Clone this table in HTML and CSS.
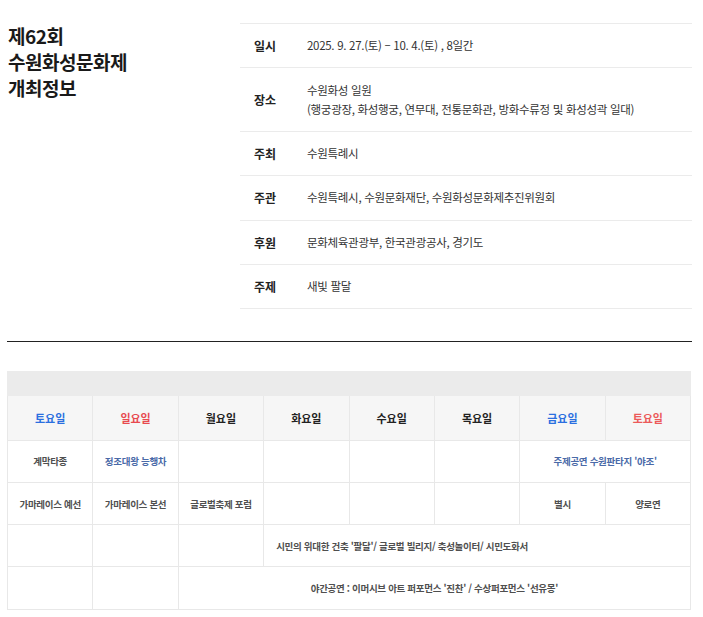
FILE: index.html
```html
<!DOCTYPE html>
<html lang="ko">
<head>
<meta charset="utf-8">
<title>제62회 수원화성문화제 개최정보</title>
<link rel="stylesheet" href="styles.css">
</head>
<body>
<div class="page">
  <section class="info">
    <h1 class="title">제62회<br>수원화성문화제<br>개최정보</h1>
    <dl class="info-list">
      <div class="info-row"><dt>일시</dt><dd>2025. 9. 27.(토) – 10. 4.(토) , 8일간</dd></div>
      <div class="info-row"><dt>장소</dt><dd>수원화성 일원<br>(행궁광장, 화성행궁, 연무대, 전통문화관, 방화수류정 및 화성성곽 일대)</dd></div>
      <div class="info-row"><dt>주최</dt><dd>수원특례시</dd></div>
      <div class="info-row"><dt>주관</dt><dd>수원특례시, 수원문화재단, 수원화성문화제추진위원회</dd></div>
      <div class="info-row"><dt>후원</dt><dd>문화체육관광부, 한국관광공사, 경기도</dd></div>
      <div class="info-row"><dt>주제</dt><dd>새빛 팔달</dd></div>
    </dl>
  </section>
  <hr class="divider">
  <div class="schedule">
    <div class="schedule-bar"></div>
    <table class="sched">
      <thead>
        <tr>
          <th class="sat">토요일</th>
          <th class="sun">일요일</th>
          <th>월요일</th>
          <th>화요일</th>
          <th>수요일</th>
          <th>목요일</th>
          <th class="fri">금요일</th>
          <th class="sat2">토요일</th>
        </tr>
      </thead>
      <tbody>
        <tr>
          <td>계막타종</td>
          <td class="hl">정조대왕 능행차</td>
          <td></td><td></td><td></td><td></td>
          <td colspan="2" class="hl">주제공연 수원판타지 '야조'</td>
        </tr>
        <tr>
          <td>가마레이스 예선</td>
          <td>가마레이스 본선</td>
          <td>글로벌축제 포럼</td>
          <td></td><td></td><td></td>
          <td>별시</td>
          <td>양로연</td>
        </tr>
        <tr>
          <td></td><td></td><td></td>
          <td colspan="5" class="left">시민의 위대한 건축 '팔달'/ 글로벌 빌리지/ 축성놀이터/ 시민도화서</td>
        </tr>
        <tr>
          <td></td><td></td>
          <td colspan="6">야간공연 : 이머시브 아트 퍼포먼스 '진찬' / 수상퍼포먼스 '선유몽'</td>
        </tr>
      </tbody>
    </table>
  </div>
</div>
</body>
</html>
```

FILE: styles.css
```css
* { box-sizing: border-box; }
html, body { margin: 0; padding: 0; background: #fff; }
body {
  font-family: "Noto Sans CJK KR", "Noto Sans", sans-serif;
  color: #222;
}
.page {
  width: 685px;
  margin-left: 7px;
}
.info {
  display: flex;
  padding-top: 23px;
}
.title {
  width: 233px;
  margin: 0;
  padding-left: 1px;
  font-size: 19px;
  line-height: 26px;
  font-weight: 700;
  color: #1a1a1a;
  letter-spacing: -0.5px;
}
.info-list {
  flex: 1;
  margin: 0;
  border-top: 1px solid #ebebeb;
}
.info-row {
  display: flex;
  align-items: center;
  border-bottom: 1px solid #ebebeb;
  padding: 12.2px 0;
}
.info-row dt {
  width: 67px;
  padding-left: 14px;
  font-size: 12px;
  line-height: 19px;
  font-weight: 700;
  color: #222;
}
.info-row dd {
  margin: 0;
  font-size: 11.5px;
  line-height: 19px;
  color: #333;
  letter-spacing: -0.3px;
}
.divider {
  margin: 32px 0 0;
  border: 0;
  border-top: 1px solid #222;
  height: 0;
}
.schedule {
  margin-top: 29px;
  width: 684px;
}
.schedule-bar {
  height: 25px;
  background: #ebebeb;
}
.sched {
  width: 100%;
  border-collapse: collapse;
  table-layout: fixed;
}
.sched th, .sched td {
  border: 1px solid #e8e8e8;
  text-align: center;
  vertical-align: middle;
}
.sched tr:first-child th { border-top: 0; }
.sched th {
  height: 44px;
  background: #f6f6f6;
  font-size: 11px;
  font-weight: 700;
  color: #222;
}
.sched th.sat, .sched th.fri { color: #2b6fe0; }
.sched th.sun { color: #e84a4f; }
.sched th.sat2 { color: #ec5a5a; }
.sched td {
  height: 42.2px;
  font-size: 9.5px;
  font-weight: 700;
  color: #4f4f4f;
  letter-spacing: -0.3px;
}
.sched td.hl { color: #4a6aa8; }
.sched td.left { text-align: left; padding-left: 12px; }
```
